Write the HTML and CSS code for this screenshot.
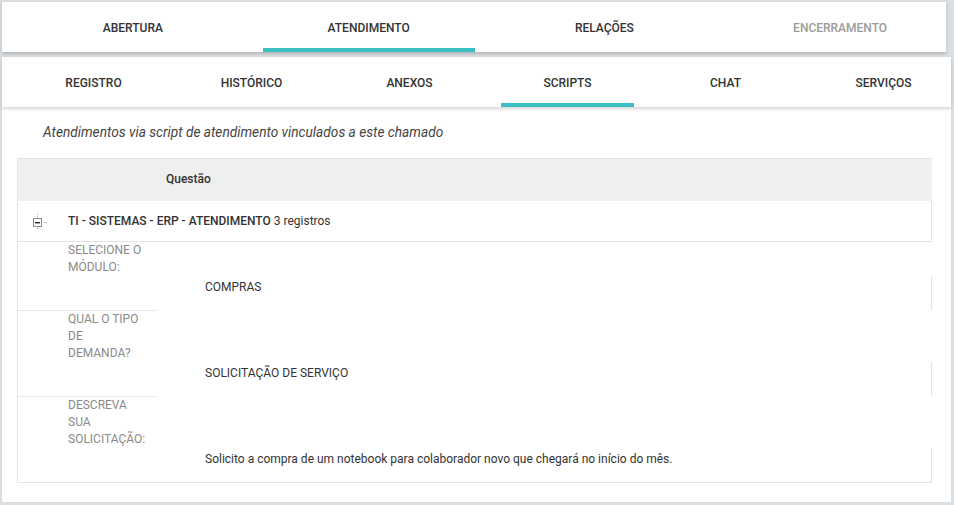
FILE: index.html
```html
<!DOCTYPE html>
<html lang="pt-BR">
<head>
<meta charset="utf-8">
<title>Atendimento - Scripts</title>
<link rel="stylesheet" href="styles.css">
</head>
<body>
<div class="page">
  <nav class="topbar">
    <div class="tab">ABERTURA</div>
    <div class="tab active">ATENDIMENTO</div>
    <div class="tab">RELAÇÕES</div>
    <div class="tab disabled">ENCERRAMENTO</div>
  </nav>
  <nav class="subbar">
    <div class="subtab">REGISTRO</div>
    <div class="subtab">HISTÓRICO</div>
    <div class="subtab">ANEXOS</div>
    <div class="subtab active">SCRIPTS</div>
    <div class="subtab">CHAT</div>
    <div class="subtab">SERVIÇOS</div>
  </nav>
  <main class="content">
    <p class="intro">Atendimentos via script de atendimento vinculados a este chamado</p>
    <div class="grid">
      <div class="grid-head">Questão</div>
      <div class="group">
        <span class="toggle">
          <svg width="16" height="18" viewBox="0 0 16 18">
            <g fill="#9a9a9a">
              <rect x="4" y="0" width="1" height="1"/>
              <rect x="4" y="2" width="1" height="1"/>
              <rect x="4" y="14" width="1" height="1"/>
              <rect x="11" y="8" width="1" height="1"/>
              <rect x="13" y="8" width="1" height="1"/>
            </g>
            <rect x="0.5" y="4.5" width="8" height="8" fill="#fff" stroke="#8c8c8c"/>
            <rect x="2" y="8" width="5" height="1.4" fill="#222"/>
          </svg>
        </span>
        <b>TI - SISTEMAS - ERP - ATENDIMENTO</b>&nbsp;3 registros
      </div>
      <div class="row">
        <div class="label">SELECIONE O MÓDULO:</div>
        <div class="value">COMPRAS</div>
      </div>
      <div class="row">
        <div class="label">QUAL O TIPO DE DEMANDA?</div>
        <div class="value">SOLICITAÇÃO DE SERVIÇO</div>
      </div>
      <div class="row last">
        <div class="label">DESCREVA SUA SOLICITAÇÃO:</div>
        <div class="value">Solicito a compra de um notebook para colaborador novo que chegará no início do mês.</div>
      </div>
    </div>
  </main>
</div>
</body>
</html>
```
FILE: styles.css
```css
* { box-sizing: border-box; }
html, body { margin: 0; padding: 0; }
body {
  background: #dadee1;
  font-family: Roboto, "Liberation Sans", Arial, sans-serif;
  color: #333;
  font-size: 12px;
}
.page {
  padding: 2px 3px 3px 2px;
  width: 954px;
  height: 505px;
}
.topbar {
  display: flex;
  gap: 24px;
  padding-left: 25px;
  width: 944px;
  height: 50px;
  background: #fff;
  box-shadow: 0 2px 3px rgba(0,0,0,0.18);
  margin-bottom: 5px;
  position: relative;
  z-index: 2;
}
.tab {
  width: 212px;
  height: 50px;
  line-height: 52px;
  text-align: center;
  font-weight: 500;
  font-size: 12px;
  color: #333;
}
.tab.active { box-shadow: inset 0 -4px 0 #3abfc1; }
.tab.disabled { color: #9b9b9b; }
.subbar {
  display: flex;
  gap: 25px;
  padding-left: 25px;
  height: 50px;
  background: #fff;
  box-shadow: 0 2px 3px rgba(0,0,0,0.16);
  position: relative;
  z-index: 1;
}
.subtab {
  width: 133px;
  height: 50px;
  line-height: 52px;
  text-align: center;
  font-weight: 500;
  font-size: 12px;
  color: #333;
}
.subtab.active { box-shadow: inset 0 -4px 0 #3abfc1; }
.content {
  background: #fff;
  height: 395px;
  padding: 17px 19px 0 15px;
}
.intro {
  margin: 0 0 17px 26px;
  font-style: italic;
  font-size: 13.7px;
  line-height: 17px;
  color: #444;
}
.grid {
  border-left: 1px solid #e3e3e3;
  border-bottom: 1px solid #e3e3e3;
}
.grid-head {
  background: #efefef;
  border-top: 1px solid #e3e3e3;
  height: 43px;
  line-height: 40px;
  padding-left: 148px;
  font-weight: 500;
  font-size: 12px;
  color: #333;
}
.group {
  display: flex;
  align-items: center;
  height: 41px;
  border-bottom: 1px solid #e3e3e3;
  border-right: 1px solid #e3e3e3;
  font-size: 12px;
  color: #333;
}
.group b { font-weight: 500; }
.toggle {
  display: inline-flex;
  width: 50px;
  padding-left: 15px;
  padding-top: 3px;
}
.row {
  display: flex;
}
.label {
  width: 139px;
  padding: 0 11px 34px 50px;
  border-bottom: 1px solid #e6e6e6;
  color: #8a8a8a;
  font-size: 12px;
  line-height: 17px;
}
.row.last .label { border-bottom: none; }
.value {
  flex: 1;
  align-self: flex-end;
  height: 34px;
  padding: 3px 0 0 48px;
  border-right: 1px solid #e3e3e3;
  line-height: 17px;
  font-size: 12px;
  color: #333;
}
.row:not(.last) .value { margin-bottom: 1px; }
```
